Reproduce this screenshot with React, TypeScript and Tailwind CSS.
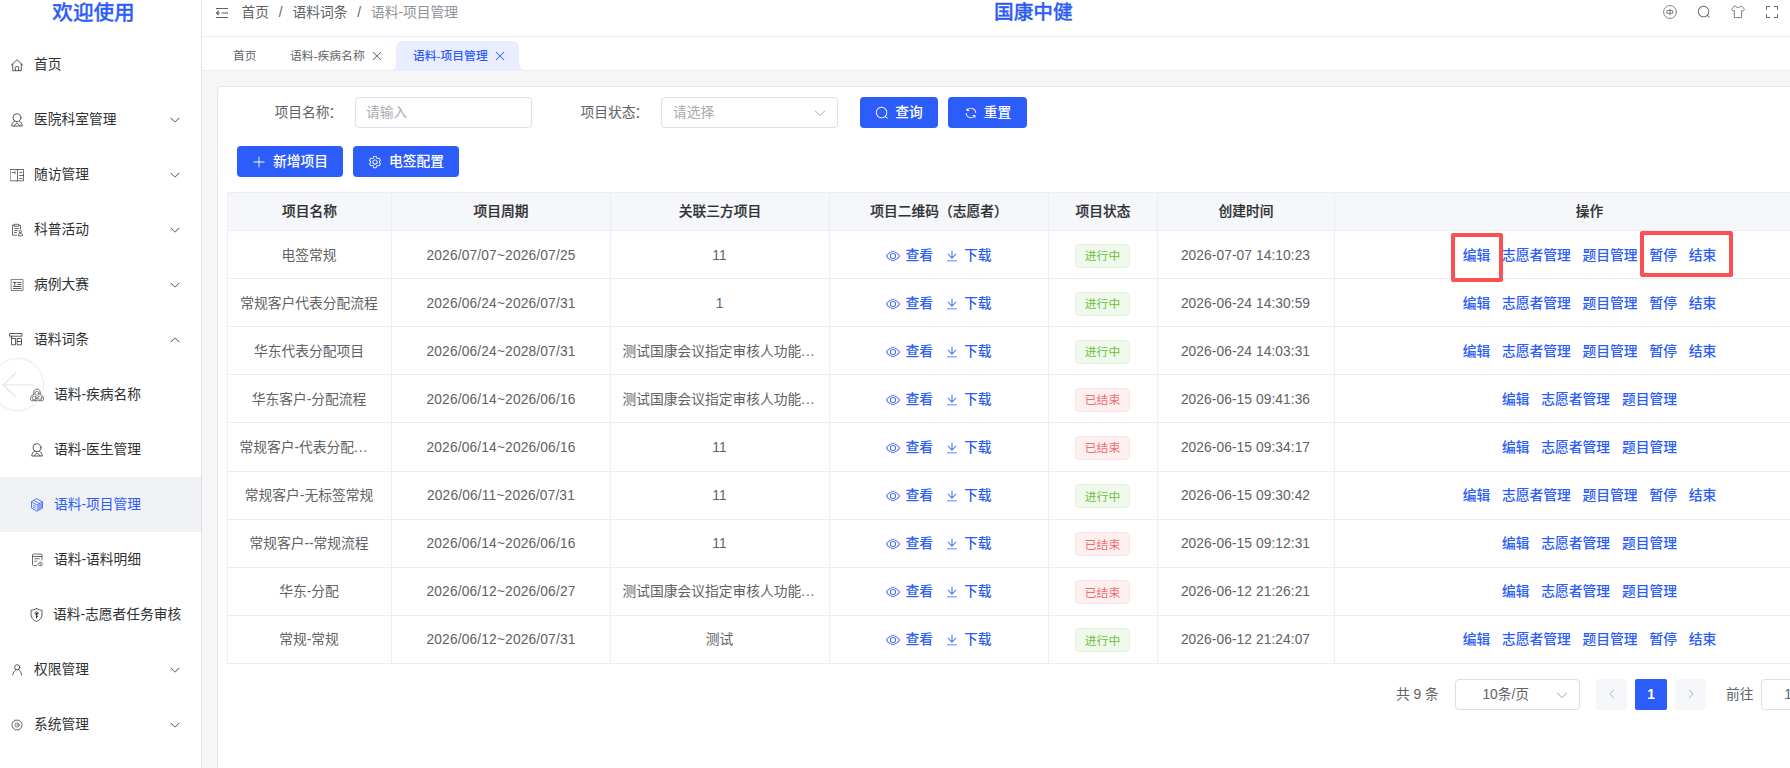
import React from "react";

const paths = {
  setting:
    "M600.704 64a32 32 0 0 1 30.464 22.208l35.2 109.376c14.784 7.232 28.928 15.36 42.432 24.512l112.384-24.192a32 32 0 0 1 34.432 15.36L944.32 364.8a32 32 0 0 1-4.032 37.504l-77.12 85.12a357.12 357.12 0 0 1 0 49.024l77.12 85.248a32 32 0 0 1 4.032 37.504l-88.704 153.6a32 32 0 0 1-34.432 15.296L708.8 803.904c-13.44 9.088-27.648 17.28-42.368 24.512l-35.264 109.376A32 32 0 0 1 600.704 960H423.296a32 32 0 0 1-30.464-22.208L357.696 828.48a351.616 351.616 0 0 1-42.56-24.64l-112.32 24.256a32 32 0 0 1-34.432-15.36L79.68 659.2a32 32 0 0 1 4.032-37.504l77.12-85.248a357.12 357.12 0 0 1 0-48.896l-77.12-85.248A32 32 0 0 1 79.68 364.8l88.704-153.6a32 32 0 0 1 34.432-15.296l112.32 24.256c13.568-9.152 27.776-17.408 42.56-24.64l35.2-109.312A32 32 0 0 1 423.232 64H600.64zm-23.424 64H446.72l-36.352 113.088-24.512 11.968a294.113 294.113 0 0 0-34.816 20.096l-22.656 15.36-116.224-25.088-65.28 113.152 79.68 88.192-1.92 27.136a293.12 293.12 0 0 0 0 40.192l1.92 27.136-79.808 88.192 65.344 113.152 116.224-25.024 22.656 15.296a294.113 294.113 0 0 0 34.816 20.096l24.512 11.968L446.72 896h130.688l36.48-113.152 24.448-11.904a288.282 288.282 0 0 0 34.752-20.096l22.592-15.296 116.288 25.024 65.28-113.152-79.744-88.192 1.92-27.136a293.12 293.12 0 0 0 0-40.256l-1.92-27.136 79.808-88.128-65.344-113.152-116.288 24.96-22.592-15.232a287.616 287.616 0 0 0-34.752-20.096l-24.448-11.904L577.344 128zM512 320a192 192 0 1 1 0 384 192 192 0 0 1 0-384zm0 64a128 128 0 1 0 0 256 128 128 0 0 0 0-256z",
  view: "M512 160c320 0 512 352 512 352S832 864 512 864 0 512 0 512s192-352 512-352zm0 64c-225.28 0-384.128 208.064-436.8 288 52.608 79.872 211.456 288 436.8 288 225.28 0 384.128-208.064 436.8-288-52.608-79.872-211.456-288-436.8-288zm0 64a224 224 0 1 1 0 448 224 224 0 0 1 0-448zm0 64a160.192 160.192 0 0 0-160 160c0 88.192 71.744 160 160 160s160-71.808 160-160-71.744-160-160-160z",
  search:
    "m795.904 750.72 124.992 124.928a32 32 0 0 1-45.248 45.248L750.656 795.904a416 416 0 1 1 45.248-45.248zM480 832a352 352 0 1 0 0-704 352 352 0 0 0 0 704z",
  download:
    "M160 832h704a32 32 0 1 1 0 64H160a32 32 0 1 1 0-64zm384-253.696 236.288-236.352 45.248 45.248L508.8 704 192 387.2l45.248-45.248L480 584.704V128h64v450.304z",
  refresh:
    "M771.776 794.88A384 384 0 0 1 128 512h64a320 320 0 0 0 555.712 216.448H654.72a32 32 0 1 1 0-64h149.056a32 32 0 0 1 32 32v148.928a32 32 0 1 1-64 0v-50.56zM276.288 295.616h92.992a32 32 0 0 1 0 64H220.16a32 32 0 0 1-32-32V178.56a32 32 0 0 1 64 0v50.56A384 384 0 0 1 896.128 512h-64a320 320 0 0 0-555.776-216.384z",
  plus: "M480 480V128a32 32 0 0 1 64 0v352h352a32 32 0 1 1 0 64H544v352a32 32 0 1 1-64 0V544H128a32 32 0 0 1 0-64z",
  down: "M831.872 340.864 512 652.672 192.128 340.864a30.592 30.592 0 0 0-42.752 0 29.12 29.12 0 0 0 0 41.6L489.664 714.24a32 32 0 0 0 44.672 0l340.288-331.712a29.12 29.12 0 0 0 0-41.728 30.592 30.592 0 0 0-42.752 0z",
  close:
    "M764.288 214.592 512 466.88 259.712 214.592a31.936 31.936 0 0 0-45.12 45.12L466.752 512 214.528 764.224a31.936 31.936 0 1 0 45.12 45.184L512 557.184l252.288 252.288a31.936 31.936 0 0 0 45.12-45.12L557.12 512.064l252.288-252.352a31.936 31.936 0 1 0-45.12-45.184z",
};

function Glyph({ name, className = "" }: { name: keyof typeof paths; className?: string }) {
  return (
    <svg viewBox="0 0 1024 1024" fill="currentColor" className={`shrink-0 ${className}`}>
      <path d={paths[name]} />
    </svg>
  );
}

function Line({ children, className = "size-[14px]" }: { children: React.ReactNode; className?: string }) {
  return (
    <svg
      viewBox="0 0 14 14"
      fill="none"
      stroke="currentColor"
      strokeWidth="0.8"
      strokeLinecap="round"
      strokeLinejoin="round"
      className={`shrink-0 ${className}`}
    >
      {children}
    </svg>
  );
}

const PersonIcon = () => (
  <Line>
    <circle cx="7" cy="4.7" r="4" />
    <path d="M4.600 8C2.900 9 1.900 10.800 1.700 13h10.600c-.2-2.200-1.200-4-2.900-5M4 12.800 7 9.800l3 3" />
  </Line>
);

type Item = { label: string; icon: React.ReactNode; arrow?: "up" | "down"; sub?: boolean; active?: boolean };

const menu: Item[] = [
  {
    label: "首页",
    icon: (
      <Line>
        <path d="M1.200 7.200 7 1.700l5.800 5.500M2.700 6v6.700h8.600V6M5.300 12.600V9.400c0-.5.3-.8.8-.8h1.800c.5 0 .8.3.8.8v3.200" />
      </Line>
    ),
  },
  { label: "医院科室管理", arrow: "down", icon: <PersonIcon /> },
  {
    label: "随访管理",
    arrow: "down",
    icon: (
      <Line>
        <path d="M.5 1.500h13v11.300H.5zM7.500 1.500v11.300M2.200 4.500h2M5 3.500v2M9.600 4.500h2.400M9.600 7.500h3.800M9.600 10.500h2.400" strokeWidth="0.7" />
      </Line>
    ),
  },
  {
    label: "科普活动",
    arrow: "down",
    icon: (
      <Line>
        <path
          d="M4 2.200H2.500v10h4M9.200 2.200h1.300v4M4.400 1.300h4.400v2H4.400zM4.500 5.500h4.200M4.500 7.500h3M4.500 9.500h2M8.200 12.400c0-1.300.8-2.200 2-2.200s2.400.9 2.400 2.200zM10.300 9.900a1.200 1.200 0 1 0 0-2.400 1.200 1.200 0 0 0 0 2.400"
          strokeWidth="0.7"
        />
      </Line>
    ),
  },
  {
    label: "病例大赛",
    arrow: "down",
    icon: (
      <Line>
        <path d="M1.500 1.500h11.500v11H1.500z" strokeWidth="0.6" />
        <path d="M3.400 4.500h2.800M4.800 4.500v3M7.800 4.500h3.200M7.800 6.500h3.200M3.400 8.500h7.600M3.400 10.500h7.600" />
      </Line>
    ),
  },
  {
    label: "语料词条",
    arrow: "up",
    icon: (
      <Line className="size-[14px] -translate-x-px -translate-y-px">
        <path d="M1 1.500h12v2.700H1zM2.500 4.200v8.600h4V6.500h-4M8.500 6.500h4v6.300h-4zM8.500 9.500h4" />
      </Line>
    ),
  },
  {
    label: "语料-疾病名称",
    sub: true,
    icon: (
      <Line>
        <path
          d="M3.800 6.200C3.200 3.200 4.800 1 7 1s3.800 2.200 3.200 5.200M3.800 6.200C1.600 7 .4 9 .4 10.900c0 1.200.6 1.800 1.800 1.800h9.600c1.200 0 1.800-.6 1.800-1.800 0-1.900-1.200-3.900-3.400-4.700M7 9v3.600"
          strokeWidth="0.7"
        />
        <circle cx="7" cy="5.400" r="2" strokeWidth="0.6" />
        <circle cx="4.100" cy="10" r="1.900" strokeWidth="0.6" />
        <circle cx="9.900" cy="10" r="1.900" strokeWidth="0.6" />
      </Line>
    ),
  },
  { label: "语料-医生管理", sub: true, icon: <PersonIcon /> },
  {
    label: "语料-项目管理",
    sub: true,
    active: true,
    icon: (
      <Line>
        <path d="M7 .8 12.500 3.900v6.200L7 13.200 1.500 10.100V3.900zM1.700 4 7 7l5.300-3M4.200 2.600 9.600 5.500M3.300 7l2 1.200M3.300 9l2 1.200" />
        <path d="M7.600 7.700 11.600 5.500v4.200l-4 2.300z" fill="currentColor" fillOpacity="0.5" strokeWidth="0.4" />
      </Line>
    ),
  },
  {
    label: "语料-语料明细",
    sub: true,
    icon: (
      <Line>
        <path
          d="M6.500 12.600h-3c-.6 0-1-.4-1-1V2c0-.6.4-1 1-1h7.500c.6 0 1 .4 1 1v5M2.500 3.500h9.500M4.700 5.800h4.600M4.700 8.200h2"
          strokeWidth="0.7"
        />
        <path d="M11.800 12.600H9.200c-.8 0-1.300-.6-1.300-1.200s.5-1.200 1.200-1.200M10 8.700v2.500h1.200M11 8.800c1 .6 1.500 1.500 1.400 2.600" strokeWidth="0.6" />
      </Line>
    ),
  },
  {
    label: "语料-志愿者任务审核",
    sub: true,
    icon: (
      <Line className="size-[14px] -translate-x-[0.5px]">
        <path d="M7 .6c1.800 1 3.600 1.500 5.500 1.700V7c0 3-2.400 5.200-5.500 6.500C3.900 12.200 1.500 10 1.500 7V2.300C3.400 2.100 5.200 1.600 7 .6z" />
        <circle cx="7" cy="5.200" r="1.500" />
        <path d="M7 5.200v4.800M7 8.200h1.200" strokeWidth="1.100" />
      </Line>
    ),
  },
  {
    label: "权限管理",
    arrow: "down",
    icon: (
      <Line>
        <circle cx="7.200" cy="4.300" r="2.600" />
        <path d="M2.800 12C3.200 9.300 4.400 7.700 6 6.800M8.600 6.700c1.700 1 2.700 2.700 3 5.300" />
      </Line>
    ),
  },
  {
    label: "系统管理",
    arrow: "down",
    icon: (
      <Line>
        <path
          d="M4.800 2.200h4.400l.8 1.300 1.500.8.6 2.700-.6 2.700-1.500.8-.8 1.300H4.800L4 10.500l-1.500-.8L1.900 7l.6-2.700L4 3.500z"
          strokeWidth="0.7"
        />
        <circle cx="7" cy="7" r="2.100" strokeWidth="0.6" />
        <circle cx="7" cy="7" r="0.300" strokeWidth="0.4" />
      </Line>
    ),
  },
];

type Row = { name: string; period: string; third: string; running: boolean; time: string };
const rows: Row[] = [
  { name: "电签常规", period: "2026/07/07~2026/07/25", third: "11", running: true, time: "2026-07-07 14:10:23" },
  { name: "常规客户代表分配流程", period: "2026/06/24~2026/07/31", third: "1", running: true, time: "2026-06-24 14:30:59" },
  { name: "华东代表分配项目", period: "2026/06/24~2028/07/31", third: "测试国康会议指定审核人功能...", running: true, time: "2026-06-24 14:03:31" },
  { name: "华东客户-分配流程", period: "2026/06/14~2026/06/16", third: "测试国康会议指定审核人功能...", running: false, time: "2026-06-15 09:41:36" },
  { name: "常规客户-代表分配...", period: "2026/06/14~2026/06/16", third: "11", running: false, time: "2026-06-15 09:34:17" },
  { name: "常规客户-无标签常规", period: "2026/06/11~2026/07/31", third: "11", running: true, time: "2026-06-15 09:30:42" },
  { name: "常规客户--常规流程", period: "2026/06/14~2026/06/16", third: "11", running: false, time: "2026-06-15 09:12:31" },
  { name: "华东-分配", period: "2026/06/12~2026/06/27", third: "测试国康会议指定审核人功能...", running: false, time: "2026-06-12 21:26:21" },
  { name: "常规-常规", period: "2026/06/12~2026/07/31", third: "测试", running: true, time: "2026-06-12 21:24:07" },
];

const headers = ["项目名称", "项目周期", "关联三方项目", "项目二维码（志愿者）", "项目状态", "创建时间", "操作"];
const gridCols = "grid grid-cols-[164px_219px_219px_219px_109px_177px_510px]";
const cellBase = "flex items-center whitespace-nowrap border-r border-b border-[#ebeef5]";
const cell = `${cellBase} justify-center pt-[2px]`;
const primary = "flex h-[31px] items-center justify-center rounded-[4px] bg-[#2c5cf9] pt-px font-medium text-white";

function ClippedCell({ text }: { text: string }) {
  if (!text.endsWith("...")) return <div className={`${cell} pr-px`}>{text}</div>;
  return (
    <div className={`${cellBase} justify-start pl-[11.500px] pt-[2px]`}>
      {text.slice(0, -3)}
      <span className="tracking-[0.8px]">...</span>
    </div>
  );
}

function Sidebar() {
  return (
    <aside className="relative flex w-[202px] shrink-0 flex-col border-r border-[#dfe2ea] bg-white">
      <div className="flex h-[37px] shrink-0 justify-center overflow-hidden pr-[14px] text-[20.6px] font-medium leading-[26px] text-[#2c5cf9] [-webkit-text-stroke:0.3px]">
        欢迎使用
      </div>
      {menu.map((m) => (
        <div
          key={m.label}
          className={`flex h-[55px] shrink-0 items-center pr-[20px] ${m.sub ? "pl-[30px]" : "pl-[10px]"} ${
            m.active ? "bg-[#f0f2f5] text-[#2c5cf9]" : "text-[#303133]"
          }`}
        >
          {m.icon}
          <span className={`flex-1 whitespace-nowrap pt-px ${m.label.length > 8 ? "ml-[9px]" : "ml-[10px]"}`}>{m.label}</span>
          {m.arrow && <Glyph name="down" className={`size-[12px] ${m.arrow === "up" ? "rotate-180" : ""}`} />}
        </div>
      ))}
      <div className="absolute left-[-9px] top-[358px] flex size-[53px] items-center justify-center rounded-full border border-[#ececec] shadow-[0_0_2px_rgba(0,0,0,0.06)]">
        <svg viewBox="0 0 32 26" className="h-[26px] w-[32px]" fill="none" stroke="#e6e6e6" strokeWidth="1.2">
          <path d="M31 13H1M14 1 1 13l13 12" />
        </svg>
      </div>
    </aside>
  );
}

function Header() {
  return (
    <header className="relative flex h-[37px] shrink-0 border-b border-[#ebeef5] bg-white pl-[14px] text-[#606266]">
      <div className="flex h-[25px] items-center">
        <svg viewBox="0 0 12 12" className="size-[12px]" fill="none" stroke="currentColor" strokeWidth="1.200">
          <path d="M0 1.500h12M5.500 6H12M0 10.500h12M4 6H.5M2.600 3.900.5 6l2.100 2.100" />
        </svg>
        <span className="ml-[13.500px]">首页</span>
        <span className="mx-[9.800px]">/</span>
        <span>语料词条</span>
        <span className="mx-[9.800px]">/</span>
        <span className="text-[#909399]">语料-项目管理</span>
      </div>
      <h1 className="absolute left-[792px] top-0 whitespace-nowrap text-[19.7px] font-medium leading-[25px] text-[#2c5cf6] [-webkit-text-stroke:0.3px]">
        国康中健
      </h1>
      <div className="ml-auto flex h-[24px] items-center gap-[20px] pr-[11.500px]">
        <Line>
          <circle cx="7" cy="7" r="6.400" />
          <path d="M4.300 5.500h5.400v2.800H4.300zM7 4.200v5.800" />
        </Line>
        <Glyph name="search" className="size-[14px]" />
        <Line>
          <path d="M4.400 1.200C5.200 3 8.800 3 9.600 1.200L11.400 1.600l2.100 2.900-1.700 1.600-1.200-.7v7.200H3.400V5.400l-1.200.7L.5 4.500l2.100-2.900z" />
        </Line>
        <Line>
          <path d="M1.500 4.800V1.500H5M9 1.500h3.500v3.300M12.500 9.200v3.300H9M5 12.500H1.500V9.200" strokeWidth="1" strokeLinecap="butt" />
        </Line>
      </div>
    </header>
  );
}

function Tabs() {
  return (
    <nav className="flex h-[34px] shrink-0 items-end border-b border-[#ebeef5] bg-white pl-[31px] text-[11.8px] text-[#606266]">
      <div className="flex h-[29px] w-[57px] items-center">首页</div>
      <div className="flex h-[29px] w-[103px] items-center">
        语料-疾病名称
        <Glyph name="close" className="ml-[5px] size-[14px]" />
      </div>
      <div className="relative flex h-[29px] w-[130px] items-center pl-[20px] font-medium text-[#2c5cf9]">
        <svg viewBox="0 0 130 29" className="absolute inset-0 h-[29px] w-[130px]" fill="#e9edff">
          <path d="M0 29C2.500 27.500 3 24 3 20V7Q3 0 10 0H119Q126 0 126 7V20C126 24 127.500 27.500 130 29Z" />
        </svg>
        <span className="relative">语料-项目管理</span>
        <Glyph name="close" className="relative ml-[5px] size-[14px]" />
      </div>
    </nav>
  );
}

function Filters() {
  return (
    <div className="flex h-[31px] items-center">
      <span className="w-[82px] pl-[1.500px] text-[#606266]">
        项目名称<span className="-ml-px">：</span>
      </span>
      <div className="flex h-[31px] w-[177px] items-center rounded-[4px] border border-[#dcdfe6] pl-[10px] pt-px text-[#a8abb2]">
        请输入
      </div>
      <span className="ml-[47px] w-[82px] pl-[1.500px] text-[#606266]">
        项目状态<span className="-ml-px">：</span>
      </span>
      <div className="flex h-[31px] w-[177px] items-center justify-between rounded-[4px] border border-[#dcdfe6] pl-[11px] pr-[10px] pt-px text-[#a8abb2]">
        请选择
        <Glyph name="down" className="size-[14px]" />
      </div>
      <button className={`${primary} ml-[22px] w-[78px] gap-[6px]`}>
        <Glyph name="search" className="size-[14px]" />
        查询
      </button>
      <button className={`${primary} ml-[10px] w-[79px] gap-[6px]`}>
        <Glyph name="refresh" className="size-[14px]" />
        重置
      </button>
    </div>
  );
}

function Table() {
  return (
    <div className="w-[1618px] border-l border-t border-[#ebeef5] text-[#606266]">
      <div className={gridCols}>
        {headers.map((h) => (
          <div key={h} className={`${cellBase} h-[38px] justify-center bg-[#f5f7fa] pt-px font-medium text-[#303133] [-webkit-text-stroke:0.2px]`}>
            {h}
          </div>
        ))}
      </div>
      {rows.map((r, i) => (
        <div key={i} className={`${gridCols} h-[48.11px]`}>
          <ClippedCell text={r.name} />
          <div className={`${cell} tracking-[0.16px]`}>{r.period}</div>
          <ClippedCell text={r.third} />
          <div className={`${cell} font-medium text-[#2c5cf9]`}>
            <Glyph name="view" className="size-[14px]" />
            <span className="ml-[5px]">查看</span>
            <Glyph name="download" className="ml-[12px] size-[14px]" />
            <span className="ml-[5px]">下载</span>
          </div>
          <div className={cell}>
            <span
              className={`mr-px flex h-[24px] w-[55px] items-center justify-center rounded-[4px] border pt-px text-[11.8px] ${
                r.running
                  ? "border-[#e1f3d8] bg-[#f0f9eb] text-[#67c23a]"
                  : "border-[#fde2e2] bg-[#fef0f0] text-[#f56c6c]"
              }`}
            >
              {r.running ? "进行中" : "已结束"}
            </span>
          </div>
          <div className={`${cell} pr-px tracking-[0.08px]`}>{r.time}</div>
          <div className={`${cell} gap-[11.800px] font-medium text-[#2c5cf9]`}>
            <span>编辑</span>
            <span>志愿者管理</span>
            <span>题目管理</span>
            {r.running && <span>暂停</span>}
            {r.running && <span>结束</span>}
          </div>
        </div>
      ))}
    </div>
  );
}

function Pagination() {
  return (
    <div className="mt-[15px] flex h-[31px] items-center whitespace-nowrap pl-[1169px] text-[#606266]">
      <span className="w-[59px] pt-[2px]">共 9 条</span>
      <div className="flex h-[31px] w-[125px] shrink-0 items-center justify-end rounded-[4px] border border-[#dcdfe6] pr-[10px] pt-px">
        10条/页
        <Glyph name="down" className="ml-[26px] size-[14px] text-[#a8abb2]" />
      </div>
      <div className="ml-[16px] flex size-[31px] shrink-0 items-center justify-center rounded-[2px] bg-[#f5f7fa] text-[#a8abb2]">
        <Glyph name="down" className="size-[12px] rotate-90" />
      </div>
      <div className="ml-[8px] flex h-[31px] w-[32px] shrink-0 items-center justify-center rounded-[2px] bg-[#2c5cf9] pt-px font-bold text-white">
        1
      </div>
      <div className="ml-[8px] flex size-[31px] shrink-0 items-center justify-center rounded-[2px] bg-[#f5f7fa] text-[#a8abb2]">
        <Glyph name="down" className="size-[12px] -rotate-90" />
      </div>
      <span className="ml-[20px] pt-[2px]">前往</span>
      <div className="ml-[7px] flex h-[31px] w-[55px] shrink-0 items-center justify-center rounded-[4px] border border-[#dcdfe6] pt-px">
        1
      </div>
    </div>
  );
}

export default function App() {
  return (
    <div
      lang="zh-CN"
      className="relative flex h-[768px] w-[1790px] overflow-hidden bg-[#f6f6f7] font-['Liberation_Sans','Noto_Sans_CJK_SC',sans-serif] text-[13.75px] leading-[20px]"
    >
      <Sidebar />
      <div className="flex min-w-0 flex-1 flex-col">
        <Header />
        <Tabs />
        <main className="min-h-0 flex-1 overflow-hidden pl-[15px] pt-[15px]">
          <section className="h-[720px] w-[1640px] rounded-[4px] border border-[#e4e7ed] bg-white pl-[9px] pt-[10px]">
            <div className="pl-[46px]">
              <Filters />
            </div>
            <div className="mb-[15px] mt-[18px] flex gap-[10px] pl-[10px]">
              <button className={`${primary} w-[106px] gap-[7px]`}>
                <Glyph name="plus" className="size-[14px]" />
                新增项目
              </button>
              <button className={`${primary} w-[106px] gap-[7px]`}>
                <Glyph name="setting" className="size-[14px]" />
                电签配置
              </button>
            </div>
            <Table />
            <Pagination />
          </section>
        </main>
      </div>
      <div className="absolute left-[1451px] top-[233px] h-[49px] w-[52px] rounded-[2px] border-4 border-[#fc5152]" />
      <div className="absolute left-[1640px] top-[231px] h-[46px] w-[93px] rounded-[2px] border-4 border-[#fc5152]" />
    </div>
  );
}
